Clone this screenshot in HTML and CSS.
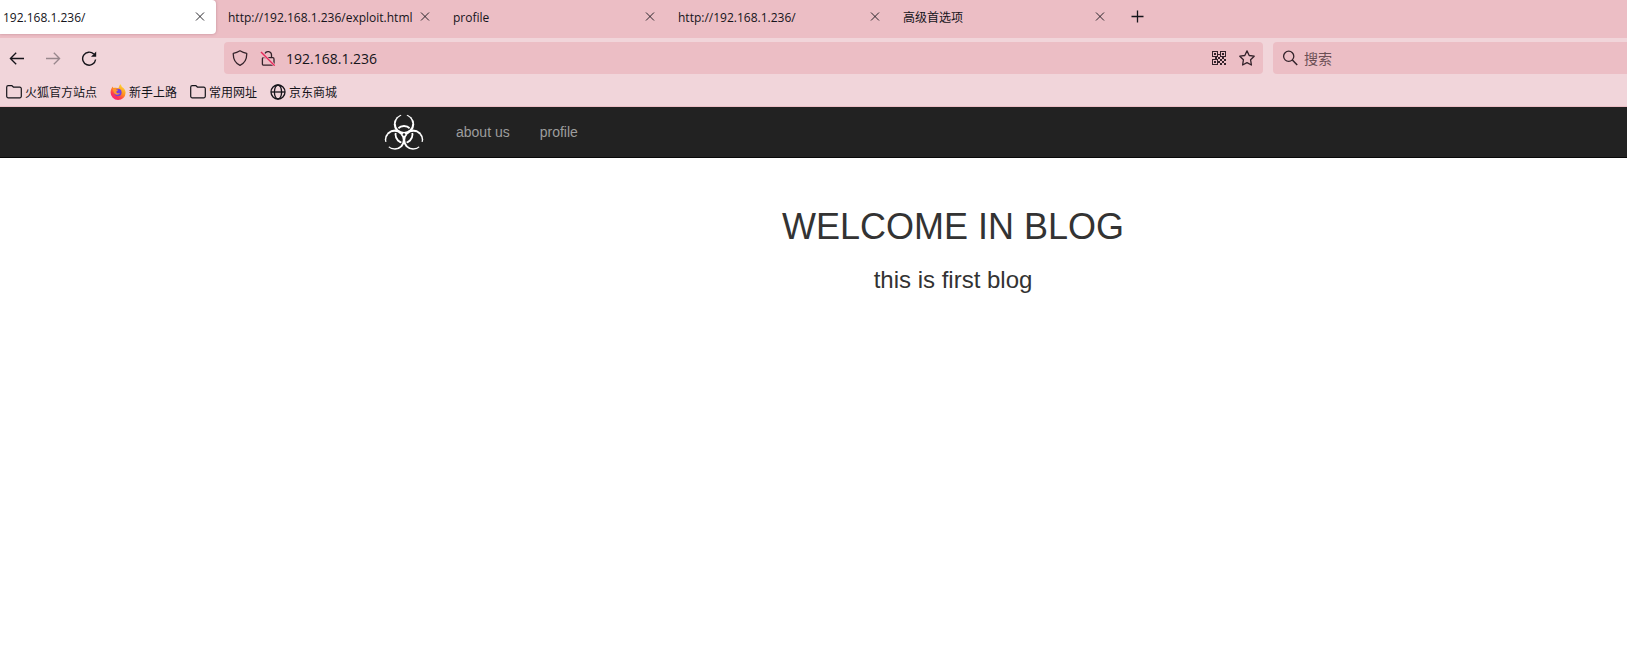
FILE: index.html
```html
<!DOCTYPE html>
<html lang="zh-CN">
<head>
<meta charset="utf-8">
<title>192.168.1.236/</title>
<link rel="stylesheet" href="styles.css">
</head>
<body>
<svg class="defs" aria-hidden="true">
  <symbol id="close" viewBox="0 0 16 16"><path d="M4 3.500l8 8M12 3.500l-8 8" fill="none" stroke="currentColor" stroke-width=".9"/></symbol>
  <symbol id="folder" viewBox="0 0 16 16"><path d="M.7 3.200v9.100a1.500 1.500 0 0 0 1.500 1.500h11.600a1.500 1.500 0 0 0 1.500-1.500V4.700a1.500 1.500 0 0 0-1.500-1.500H7.600L6 1.700H2.200A1.500 1.500 0 0 0 .7 3.200z" fill="none" stroke="currentColor" stroke-width="1.200" stroke-linejoin="round"/></symbol>
</svg>
<header class="browser">
  <div class="tabs" role="tablist">
    <div class="tab tab-active"><span class="tab-title" role="tab" aria-selected="true">192.168.1.236/</span><button class="icon-button" aria-label="Close tab"><svg><use href="#close"/></svg></button></div>
    <div class="tab"><span class="tab-title" role="tab">http://192.168.1.236/exploit.html</span><button class="icon-button" aria-label="Close tab"><svg><use href="#close"/></svg></button></div>
    <div class="tab"><span class="tab-title" role="tab">profile</span><button class="icon-button" aria-label="Close tab"><svg><use href="#close"/></svg></button></div>
    <div class="tab"><span class="tab-title" role="tab">http://192.168.1.236/</span><button class="icon-button" aria-label="Close tab"><svg><use href="#close"/></svg></button></div>
    <div class="tab"><span class="tab-title" role="tab">高级首选项</span><button class="icon-button" aria-label="Close tab"><svg><use href="#close"/></svg></button></div>
    <button class="icon-button new-tab" aria-label="New tab"><svg viewBox="0 0 16 16"><path d="M8.500 2.500v12M2.500 8.500h12" fill="none" stroke="currentColor" stroke-width="1.300"/></svg></button>
  </div>
  <div class="toolbar">
    <div class="nav-buttons">
      <button class="icon-button" aria-label="Back"><svg viewBox="0 0 16 16"><path d="M15 8.500H1.500M7.200 2.700L1.400 8.500l5.800 5.800" fill="none" stroke="currentColor" stroke-width="1.300"/></svg></button>
      <button class="icon-button" aria-label="Forward" disabled><svg viewBox="0 0 16 16"><path d="M1 8.500h13.500M8.800 2.700L14.600 8.500l-5.800 5.800" fill="none" stroke="currentColor" stroke-width="1.300"/></svg></button>
      <button class="icon-button" aria-label="Reload"><svg viewBox="0 0 16 16"><path d="M12.800 4.100A6.500 6.500 0 1 0 14.600 9.500" fill="none" stroke="currentColor" stroke-width="1.400"/><path d="M15.200 1.500v5.200H10z" fill="currentColor"/></svg></button>
    </div>
    <div class="field address">
      <svg class="icon" viewBox="0 0 16 16"><path d="M8 .8c2.400 1.500 4.600 2.200 6.700 2.500.3 6.100-2 9.900-6.700 12-4.700-2.100-7-5.900-6.700-12C3.400 3 5.600 2.300 8 .8z" fill="none" stroke="currentColor" stroke-width="1.300" stroke-linejoin="round"/></svg>
      <svg class="icon" viewBox="0 0 16 16"><path d="M4.500 7.700h8.300a1.200 1.200 0 0 1 1.200 1.200v5a1.200 1.200 0 0 1-1.200 1.200H3.600a1.200 1.200 0 0 1-1.200-1.200v-5a1.200 1.200 0 0 1 1.200-1.200M4.900 3.500a3.500 3.500 0 0 1 6.600 1.300v2.900" fill="none" stroke="currentColor" stroke-width="1.300"/><path d="M1 2l13.700 13.700" stroke="#ecbec5" stroke-width="2.600"/><path d="M1 2l13.700 13.700" stroke="#e82a5c" stroke-width="1.400"/></svg>
      <input class="field-input" aria-label="Address" value="192.168.1.236">
      <svg class="icon" viewBox="0 0 16 16" shape-rendering="crispEdges"><path fill="currentColor" fill-rule="evenodd" d="M1 1h6v6H1zM2 2v4h4V2zM9 1h6v6H9zM10 2v4h4V2zM1 9h6v6H1zM2 10v4h4v-4zM3 3h2v2H3zM11 3h2v2h-2zM3 11h2v2H3zM7 4h2v1H7zM4 7h2v2H4zM7 7h2v2H7zM9 9h2v2H9zM11 7h2v2h-2zM13 9h2v2h-2zM11 11h2v2h-2zM7 11h2v2H7zM9 13h2v2H9zM13 13h2v2h-2z"/></svg>
      <svg class="icon" viewBox="0 0 16 16"><path d="M8 .9l2.200 4.600 5 .7-3.600 3.600.8 5.200L8 12.600 3.600 15l.8-5.200L.8 6.200l5-.7z" fill="none" stroke="currentColor" stroke-width="1.300" stroke-linejoin="round"/></svg>
    </div>
    <div class="field search">
      <svg class="icon" viewBox="0 0 16 16"><circle cx="6.700" cy="6.300" r="5.100" fill="none" stroke="currentColor" stroke-width="1.300"/><path d="M10.400 10l4.800 4.900" stroke="currentColor" stroke-width="1.500"/></svg>
      <input class="field-input" aria-label="搜索" placeholder="搜索">
    </div>
  </div>
  <nav class="bookmarks">
    <a class="bookmark" href="#"><svg class="icon"><use href="#folder"/></svg>火狐官方站点</a>
    <a class="bookmark" href="#"><svg class="icon" viewBox="0 0 16 16"><defs><linearGradient id="flame" x1=".85" y1="0" x2=".2" y2="1"><stop offset="0" stop-color="#ffe536"/><stop offset=".45" stop-color="#ff9020"/><stop offset=".75" stop-color="#ff3850"/><stop offset="1" stop-color="#f0208c"/></linearGradient></defs><path d="M10.200.3c1 .8 1.300 1.700 1.700 2.600 2.400 1.300 3.700 3.400 3.700 5.900A7.400 7.200 0 0 1 .6 8.600c0-2.600.8-4.700 2.200-6.200l.6 1.700c1.800-.6 3.700-.6 5 .2.700-1.300.9-2.600 1.800-4z" fill="url(#flame)"/><circle cx="7.900" cy="8.500" r="3.700" fill="#7040e0"/><path d="M2.500 4.800c1.600-.7 3.100-.3 4.100.6l1.700.3c-.3 1-1.500 1.200-2 1.800 0 1.800 1.800 2.300 3.800 1.500-1 2.300-5.900 2.500-6.500-1.300z" fill="#ff9530"/></svg>新手上路</a>
    <a class="bookmark" href="#"><svg class="icon"><use href="#folder"/></svg>常用网址</a>
    <a class="bookmark" href="#"><svg class="icon" viewBox="0 0 16 16"><g fill="none" stroke="currentColor" stroke-width="1.300"><circle cx="8" cy="8" r="7"/><ellipse cx="8" cy="8" rx="3.600" ry="7"/><path d="M1 8h14"/></g></svg>京东商城</a>
  </nav>
</header>
<nav class="site-nav">
  <a class="brand" href="#" aria-label="Home">
    <svg viewBox="0 0 40 37">
      <defs>
        <mask id="blades"><rect width="40" height="37" fill="#fff"/><circle cx="20" cy="9.600" r="8.300"/><circle cx="10.500" cy="26.050" r="8.300"/><circle cx="29.500" cy="26.050" r="8.300"/><circle cx="20" cy="20.500" r="1.300"/><circle cx="20" cy=".3" r="3"/><circle cx="2.500" cy="30.700" r="3"/><circle cx="37.500" cy="30.700" r="3"/></mask>
        <clipPath id="cuts"><circle cx="20" cy="9.600" r="7.400"/><circle cx="10.500" cy="26.050" r="7.400"/><circle cx="29.500" cy="26.050" r="7.400"/></clipPath>
      </defs>
      <g mask="url(#blades)" fill="#fff"><circle cx="20" cy="10.500" r="10.200"/><circle cx="11" cy="25.600" r="10.200"/><circle cx="29" cy="25.600" r="10.200"/></g>
      <circle cx="20" cy="20.500" r="8.500" fill="none" stroke="#fff" stroke-width="1.800" clip-path="url(#cuts)"/>
    </svg>
  </a>
  <a class="site-link" href="#">about us</a>
  <a class="site-link" href="#">profile</a>
</nav>
<main class="content">
  <h1>WELCOME IN BLOG</h1>
  <h3>this is first blog</h3>
</main>
</body>
</html>
```
FILE: styles.css
```css
* { box-sizing: border-box; }
body {
  margin: 0;
  background: #fff;
  color: #333;
  font-family: "Liberation Sans", Arial, sans-serif;
  overflow-x: hidden;
}
.defs { position: absolute; width: 0; height: 0; }
.browser {
  background: #f1d5da;
  border-bottom: 1px solid #ecbec5;
  color: #15141a;
  font-family: "Open Sans", "Noto Sans CJK SC", sans-serif;
  font-size: 12px;
}
.tabs {
  display: flex;
  gap: 9px;
  height: 38px;
  background: #ecbec5;
}
.tab {
  display: flex;
  align-items: center;
  flex: 0 0 216px;
  height: 34px;
  padding: 0 8px 0 3px;
  border-radius: 0 4px 4px 0;
}
.tab-active {
  background: #fff;
  box-shadow: 0 0 3px rgba(128, 64, 80, 0.4);
}
.tab-title { flex: 1; white-space: nowrap; }
.icon-button {
  display: block;
  flex: none;
  width: 16px;
  height: 16px;
  padding: 0;
  border: 0;
  background: none;
  color: inherit;
}
.icon-button svg { display: block; width: 16px; height: 16px; }
.icon-button:disabled { opacity: 0.4; }
.new-tab { margin: 8px 0 0 4px; }
.toolbar {
  display: flex;
  align-items: center;
  height: 40px;
}
.nav-buttons {
  display: flex;
  gap: 20px;
  flex: 0 0 224px;
  padding-left: 9px;
}
.field {
  display: flex;
  align-items: center;
  gap: 12px;
  height: 32px;
  padding: 0 8px;
  border-radius: 4px;
  background: #ecbec5;
}
.address { flex: 1; margin-right: 10px; }
.search {
  flex: 0 0 354px;
  gap: 6px;
  padding-left: 9px;
  border-radius: 4px 0 0 4px;
}
.icon { display: block; flex: none; width: 16px; height: 16px; }
.field .icon { color: #33222a; }
.field-input {
  flex: 1;
  min-width: 0;
  padding: 0;
  border: 0;
  outline: 0;
  background: none;
  color: #15141a;
  font: inherit;
  font-size: 14px;
}
.field-input::placeholder { color: #6b4f55; opacity: 1; }
.address .field-input { margin-left: -2px; }
.bookmarks {
  display: flex;
  gap: 13px;
  height: 28px;
  padding-left: 6px;
}
.bookmark {
  display: flex;
  align-items: center;
  gap: 3px;
  color: inherit;
  text-decoration: none;
  white-space: nowrap;
}
.site-nav {
  display: flex;
  align-items: center;
  height: 51px;
  padding-left: 384px;
  border-bottom: 1px solid #080808;
  background: #222;
}
.brand { width: 57px; }
.brand svg { display: block; width: 40px; height: 37px; }
.site-link {
  padding: 0 15px;
  color: #9d9d9d;
  font-size: 14px;
  line-height: 20px;
  text-decoration: none;
}
.content { padding: 49px 0 0 279px; text-align: center; }
h1, h3 { margin: 0; font-weight: 400; }
h1 { margin-bottom: 20px; font-size: 36px; line-height: 40px; }
h3 { font-size: 24px; line-height: 26px; }
```
